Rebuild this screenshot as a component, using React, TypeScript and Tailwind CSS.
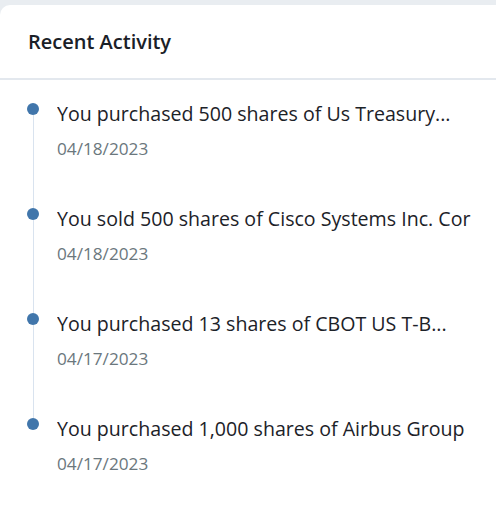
const activities = [
  { text: "You purchased 500 shares of Us Treasury...", date: "04/18/2023" },
  { text: "You sold 500 shares of Cisco Systems Inc. Cor", date: "04/18/2023" },
  { text: "You purchased 13 shares of CBOT US T-B...", date: "04/17/2023" },
  { text: "You purchased 1,000 shares of Airbus Group", date: "04/17/2023" },
];

export default function App() {
  return (
    <div className="min-h-[530px] bg-[#e9edf1] pt-[5px] font-['Open_Sans',sans-serif]">
      <div className="min-h-[525px] rounded-tl-[10px] bg-white">
        {/* Header */}
        <div className="flex h-[75px] items-center border-b-2 border-[#e3e8ee] px-7">
          <h2 className="text-[20px] font-semibold text-[#1a2027]">Recent Activity</h2>
        </div>

        {/* Timeline */}
        <ul className="pt-[17px] pl-[27px] pr-6">
          {activities.map((a, i) => (
            <li key={i} className="flex h-[105px] gap-[18px]">
              <div className="flex w-[12px] flex-col items-center">
                <div className={`h-[6px] w-px ${i > 0 ? "bg-[#d9e3ef]" : ""}`} />
                <div className="h-[12px] w-[12px] shrink-0 rounded-full bg-[#4176ab]" />
                <div className={`w-px flex-1 ${i < activities.length - 1 ? "bg-[#d9e3ef]" : ""}`} />
              </div>
              <div className="min-w-0 flex-1 overflow-hidden pt-[3px]">
                <p className="whitespace-nowrap text-[19.6px] leading-[28px] text-[#1c2228]">{a.text}</p>
                <p className="mt-[9px] text-[17.2px] leading-[24px] text-[#6b777d]">{a.date}</p>
              </div>
            </li>
          ))}
        </ul>
      </div>
    </div>
  );
}
